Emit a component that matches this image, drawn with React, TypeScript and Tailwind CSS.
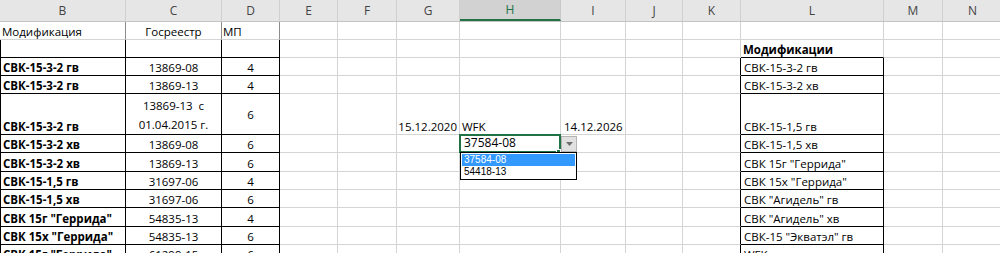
const cols = [
  { id: "B", w: 126 },
  { id: "C", w: 96 },
  { id: "D", w: 58 },
  { id: "E", w: 58 },
  { id: "F", w: 59 },
  { id: "G", w: 63 },
  { id: "H", w: 101 },
  { id: "I", w: 65 },
  { id: "J", w: 57 },
  { id: "K", w: 58 },
  { id: "L", w: 143 },
  { id: "M", w: 59 },
  { id: "N", w: 60 },
];

type Row = {
  h: number;
  b?: string;
  c?: string;
  d?: string;
  g?: string;
  h2?: string;
  i?: string;
  l?: string;
  lBold?: boolean;
  active?: boolean;
};

const rows: Row[] = [
  { h: 18, b: "Модификация", c: "Госреестр", d: "МП" },
  { h: 18, l: "Модификации", lBold: true },
  { h: 18, b: "СВК-15-3-2 гв", c: "13869-08", d: "4", l: "СВК-15-3-2 гв" },
  { h: 18, b: "СВК-15-3-2 гв", c: "13869-13", d: "4", l: "СВК-15-3-2 хв" },
  { h: 41, b: "СВК-15-3-2 гв", c: "13869-13  с\n01.04.2015 г.", d: "6", g: "15.12.2020", h2: "WFK", i: "14.12.2026", l: "СВК-15-1,5 гв" },
  { h: 18, b: "СВК-15-3-2 хв", c: "13869-08", d: "6", active: true, l: "СВК-15-1,5 хв" },
  { h: 19, b: "СВК-15-3-2 хв", c: "13869-13", d: "6", l: "СВК 15г \"Геррида\"" },
  { h: 18, b: "СВК-15-1,5 гв", c: "31697-06", d: "4", l: "СВК 15х \"Геррида\"" },
  { h: 18, b: "СВК-15-1,5 хв", c: "31697-06", d: "6", l: "СВК \"Агидель\" гв" },
  { h: 19, b: "СВК 15г \"Геррида\"", c: "54835-13", d: "4", l: "СВК \"Агидель\" хв" },
  { h: 18, b: "СВК 15х \"Геррида\"", c: "54835-13", d: "6", l: "СВК-15 \"Экватэл\" гв" },
  { h: 18, b: "СВК 15г \"Геррида\"", c: "61299-15", d: "6", l: "WFK" },
];

function Dropdown() {
  return (
    <>
      <div className="absolute left-[-1px] top-[-1px] right-[-1px] bottom-[-1px] border-2 border-[#217346] flex items-end pl-[3px] text-[12px] leading-[16px]">
        37584-08
      </div>
      <div className="absolute right-[-1px] bottom-[-2px] w-[5px] h-[5px] bg-[#217346] border border-white" />
      <div className="absolute left-[101px] top-[1px] w-[16px] h-[16px] bg-[#e1e1e1] border border-[#b4b4b4] flex items-center justify-center">
        <svg width="7" height="4" viewBox="0 0 7 4">
          <path d="M0 0h7L3.5 4z" fill="#6d6d6d" />
        </svg>
      </div>
      <div className="absolute left-0 top-[17px] w-[117px] bg-white border border-black z-10 text-[10px] leading-[12px] font-['Liberation_Sans',sans-serif] p-[1px]">
        <div className="bg-[#3399ff] text-white pl-[2px]">37584-08</div>
        <div className="pl-[2px]">54418-13</div>
      </div>
    </>
  );
}

export default function App() {
  return (
    <div className="w-[1000px] h-[253px] overflow-hidden bg-white font-['Open_Sans',sans-serif] text-[11.5px] text-black">
      <div className="flex h-[22px] bg-[#e6e6e6] border-b border-[#c4c4c4]">
        {cols.map((c) => (
          <div
            key={c.id}
            style={{ width: c.w }}
            className={
              c.id === "H"
                ? "shrink-0 flex items-center justify-center border-r border-[#c8c8c8] bg-[#d2d2d2] border-b-2 border-b-[#217346] text-[#217346] text-[12px]"
                : "shrink-0 flex items-center justify-center border-r border-[#d0d0d0] text-[#444] text-[12px]"
            }
          >
            {c.id}
          </div>
        ))}
      </div>
      {rows.map((r, ri) => (
        <div key={ri} className="flex" style={{ height: r.h }}>
          {cols.map((c) => {
            let cls = "shrink-0 relative flex items-end border-r border-b leading-[15px] ";
            let content: React.ReactNode = null;
            const inTable = ri >= 1;
            if (c.id === "B" || c.id === "C" || c.id === "D") {
              cls += inTable ? "border-r-black border-b-black " : "border-r-[#8c8c8c] border-b-[#d4d4d4] ";
              if (c.id === "B") cls += inTable ? "border-l border-l-black " : "";
            } else if (c.id === "K") {
              cls += ri >= 2 ? "border-r-black border-b-[#d4d4d4] " : "border-r-[#d4d4d4] border-b-[#d4d4d4] ";
            } else if (c.id === "L") {
              cls += ri >= 2 ? "border-r-black border-b-black " : ri === 1 ? "border-r-[#d4d4d4] border-b-black " : "border-r-[#d4d4d4] border-b-[#d4d4d4] ";
            } else {
              cls += "border-r-[#d4d4d4] border-b-[#d4d4d4] ";
            }
            if (c.id === "B" && r.b) {
              content = r.b;
              cls += ri >= 1 ? "font-bold pl-[2px] " : "pl-[2px] ";
            }
            if (c.id === "C" && r.c) {
              content = <span className={r.h > 30 ? "whitespace-pre text-center w-full leading-[19px]" : "whitespace-pre text-center w-full"}>{r.c}</span>;
              cls += "justify-center ";
            }
            if (c.id === "D" && r.d) {
              content = r.d;
              cls += ri === 0 ? "pl-[1px] " : r.h > 30 ? "justify-center !items-center " : "justify-center ";
            }
            if (c.id === "G" && r.g) {
              content = r.g;
              cls += "justify-end pr-[2px] ";
            }
            if (c.id === "H" && r.h2) {
              content = r.h2;
              cls += "pl-[2px] ";
            }
            if (c.id === "I" && r.i) {
              content = r.i;
              cls += "pl-[3px] ";
            }
            if (c.id === "L" && r.l) {
              content = r.l;
              cls += r.lBold ? "font-bold pl-[2px] " : "pl-[3px] ";
            }
            if (c.id === "H" && r.active) {
              content = <Dropdown />;
              cls += "z-10 ";
            }
            return (
              <div key={c.id} style={{ width: c.w }} className={cls + "whitespace-nowrap"}>
                {content}
              </div>
            );
          })}
        </div>
      ))}
    </div>
  );
}
